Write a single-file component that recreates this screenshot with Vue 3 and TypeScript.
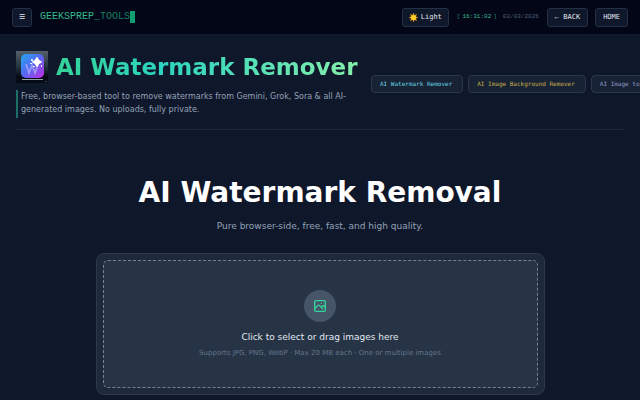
<script setup lang="ts">
interface ToolLink {
  label: string
  tone: string
}

const tools: ToolLink[] = [
  { label: 'AI Watermark Remover', tone: 'cyan' },
  { label: 'AI Image Background Remover', tone: 'gold' },
  { label: 'AI Image to Text', tone: 'violet' },
]
</script>

<template>
  <div class="page">
    <header class="topbar">
      <button class="btn menu" type="button" aria-label="Menu">☰</button>
      <a class="brand" href="#"><span>GEEKSPREP</span><span class="suffix">_TOOLS</span><i class="cursor"></i></a>
      <div class="actions">
        <button class="btn theme" type="button">
          <svg class="sun" viewBox="0 0 16 16" aria-hidden="true">
            <path d="M8 0l1.300 4h-2.600zM8 16l1.300-4h-2.600zM0 8l4-1.300v2.600zM16 8l-4-1.300v2.600zM2.300 2.300l3.800 1.900-1.900 1.900zM13.700 2.300l-1.900 3.800-1.900-1.900zM2.300 13.700l1.900-3.800 1.900 1.900zM13.700 13.700l-3.800-1.900 1.900-1.900z" fill="#f3a51c" stroke="#f3a51c" stroke-width=".6" />
            <circle cx="8" cy="8" r="4.600" fill="#ffd02b" />
          </svg>
          <span>Light</span>
        </button>
        <span class="clock"><span class="bracket">[</span><time>16:31:02</time><span class="bracket">]</span></span>
        <time class="date">02/03/2026</time>
        <a class="btn nav" href="#"><span class="arrow">←</span> BACK</a>
        <a class="btn nav" href="#">HOME</a>
      </div>
    </header>

    <main class="content">
      <section class="intro">
        <div class="lead">
          <div class="heading">
            <svg class="logo" viewBox="0 0 32 32" aria-hidden="true">
              <defs>
                <linearGradient id="photo" x1="0" y1="0" x2="0" y2="1">
                  <stop offset="0" stop-color="#56606a" />
                  <stop offset=".5" stop-color="#23343b" />
                  <stop offset=".8" stop-color="#050c16" />
                </linearGradient>
                <linearGradient id="tile" x1="0" y1="0" x2="1" y2="1">
                  <stop offset="0" stop-color="#22a9f2" />
                  <stop offset=".5" stop-color="#5865f1" />
                  <stop offset="1" stop-color="#c32de2" />
                </linearGradient>
              </defs>
              <rect width="32" height="32" fill="url(#photo)" />
              <rect x="5" y="3" width="23" height="24" rx="5" fill="url(#tile)" />
              <path d="M10 13l3 9 3-8 3 8 3-8" fill="none" stroke="#b8b4fa" stroke-width="1.800" opacity=".65" />
              <path d="M21 7q1 3 4 4-3 1-4 4-1-3-4-4 3-1 4-4z" fill="#fff" stroke="#fff" stroke-width="1.800" stroke-linejoin="round" />
              <path d="M15 8h2v2h-2zM14 12h2v1h-2zM17 15h2v1h-2zM25 14h1v2h-1z" fill="#e5efff" />
              <path d="M6 28.500h21" stroke="#b9c2cc" stroke-width=".8" />
              <circle cx="30" cy="30.500" r=".6" fill="#77828e" />
            </svg>
            <h1>AI Watermark Remover</h1>
          </div>
          <p class="summary">Free, browser-based tool to remove watermarks from Gemini, Grok, Sora &amp; all AI-generated images. No uploads, fully private.</p>
        </div>
        <nav class="tools" aria-label="Tools">
          <a v-for="tool in tools" :key="tool.label" class="tool" :class="tool.tone" href="#">{{ tool.label }}</a>
        </nav>
      </section>

      <section class="hero">
        <h2>AI Watermark Removal</h2>
        <p>Pure browser-side, free, fast, and high quality.</p>
      </section>

      <section class="panel">
        <button class="dropzone" type="button">
          <span class="badge">
            <svg viewBox="0 0 24 24" fill="none" stroke="#34d399" stroke-width="2" stroke-linecap="round" stroke-linejoin="round" aria-hidden="true">
              <rect x="4" y="4" width="16" height="16" rx="2" />
              <path d="M4 16l4.586-4.586a2 2 0 0 1 2.828 0L16 16M14 14l1.586-1.586a2 2 0 0 1 2.828 0L20 14M14 8h.01" />
            </svg>
          </span>
          <span class="prompt">Click to select or drag images here</span>
          <span class="hint">Supports JPG, PNG, WebP · Max 20 MB each · One or multiple images</span>
        </button>
      </section>
    </main>
  </div>
</template>

<style>
body {
  background: #0f172a;
}
</style>

<style scoped>
.page {
  height: 100vh;
  overflow: hidden;
  color: #e2e8f0;
  background: #0f172a;
  font-family: "DejaVu Sans", sans-serif;
}

.topbar {
  display: flex;
  align-items: center;
  box-sizing: border-box;
  height: 35px;
  padding: 0 12px;
  background: #020617;
  border-bottom: 1px solid #111a2c;
  font-family: "Liberation Mono", monospace;
}

.btn {
  display: inline-flex;
  align-items: center;
  justify-content: center;
  box-sizing: border-box;
  height: 19px;
  padding: 0 7px;
  border: 1px solid #243044;
  border-radius: 3px;
  background: #0f172a;
  color: #e2e8f0;
  font-family: "DejaVu Sans Mono", monospace;
  font-size: 7px;
  line-height: 10px;
  text-decoration: none;
  white-space: pre;
}

.menu {
  width: 20px;
  padding: 0;
}

.brand {
  display: flex;
  align-items: center;
  margin-left: 8px;
  color: #34b98b;
  font-size: 10px;
  line-height: 12px;
  text-decoration: none;
}

.suffix {
  color: #168062;
}

.cursor {
  width: 5px;
  height: 12px;
  background: #0f9f73;
}

.actions {
  display: flex;
  align-items: center;
  margin-left: auto;
}

.theme {
  gap: 3px;
  padding: 0 6px;
}

.sun {
  width: 9px;
  height: 9px;
}

.clock {
  display: flex;
  gap: 2px;
  margin-left: 8px;
  color: #34b98b;
  font-size: 6px;
  line-height: 10px;
}

.bracket {
  color: #218166;
}

.date {
  margin: 0 8px 0 6px;
  color: #526075;
  font-size: 6px;
  line-height: 10px;
}

.nav + .nav {
  margin-left: 7px;
}

.arrow {
  font-family: "Liberation Mono", monospace;
}

.content {
  padding: 16px 16px 0;
}

.intro {
  display: flex;
  align-items: center;
  gap: 12px;
  padding-bottom: 11px;
  border-bottom: 1px solid #1e293b;
}

.lead {
  flex: none;
  width: 343px;
}

.heading {
  display: flex;
  align-items: center;
  gap: 8px;
}

.logo {
  flex: none;
  width: 32px;
  height: 32px;
}

h1 {
  margin: 0;
  color: transparent;
  background: linear-gradient(90deg, #34d399, #2dd4bf 35%, #86efac);
  background-clip: text;
  font-size: 23px;
  line-height: 32px;
  white-space: nowrap;
}

.summary {
  margin: 7px 0 0;
  padding: 0 0 2px 3px;
  border-left: 2px solid #1b6f67;
  color: #94a3b8;
  font-size: 8px;
  line-height: 13px;
}

.tools {
  display: flex;
  flex: 1;
  gap: 5px;
  min-width: 0;
  margin: 0 -16px 2px 0;
  overflow: hidden;
}

.tool {
  flex: none;
  box-sizing: border-box;
  height: 18px;
  padding: 0 10px 0 8px;
  border: 1px solid #2a374a;
  border-radius: 4px;
  background: #172235;
  font-family: "DejaVu Sans Mono", monospace;
  font-size: 6px;
  line-height: 16px;
  text-decoration: none;
}

.cyan {
  color: #67d5e5;
}

.gold {
  color: #c9ad49;
}

.violet {
  color: #9298c8;
}

.hero {
  padding-top: 45px;
  text-align: center;
}

.hero h2 {
  margin: 0;
  color: #ffffff;
  font-size: 28px;
  line-height: 36px;
}

.hero p {
  margin: 8px 0 0;
  color: #94a3b8;
  font-size: 9px;
  line-height: 14px;
}

.panel {
  box-sizing: border-box;
  max-width: 449px;
  margin: 20px auto 0;
  padding: 6px;
  border: 1px solid #2b394a;
  border-radius: 8px;
  background: #1e293b;
}

.dropzone {
  display: flex;
  flex-direction: column;
  align-items: center;
  box-sizing: border-box;
  width: 100%;
  padding: 29px 16px 28px;
  border: 1px dashed #748293;
  border-radius: 5px;
  background: #263445;
  color: #e2e8f0;
  font-family: inherit;
}

.badge {
  display: flex;
  align-items: center;
  justify-content: center;
  width: 32px;
  height: 32px;
  border-radius: 50%;
  background: #475569;
}

.badge svg {
  width: 16px;
  height: 16px;
}

.prompt {
  margin-top: 8px;
  font-size: 9px;
  line-height: 14px;
}

.hint {
  margin-top: 4px;
  color: #64748b;
  font-size: 7px;
  line-height: 11px;
}
</style>
